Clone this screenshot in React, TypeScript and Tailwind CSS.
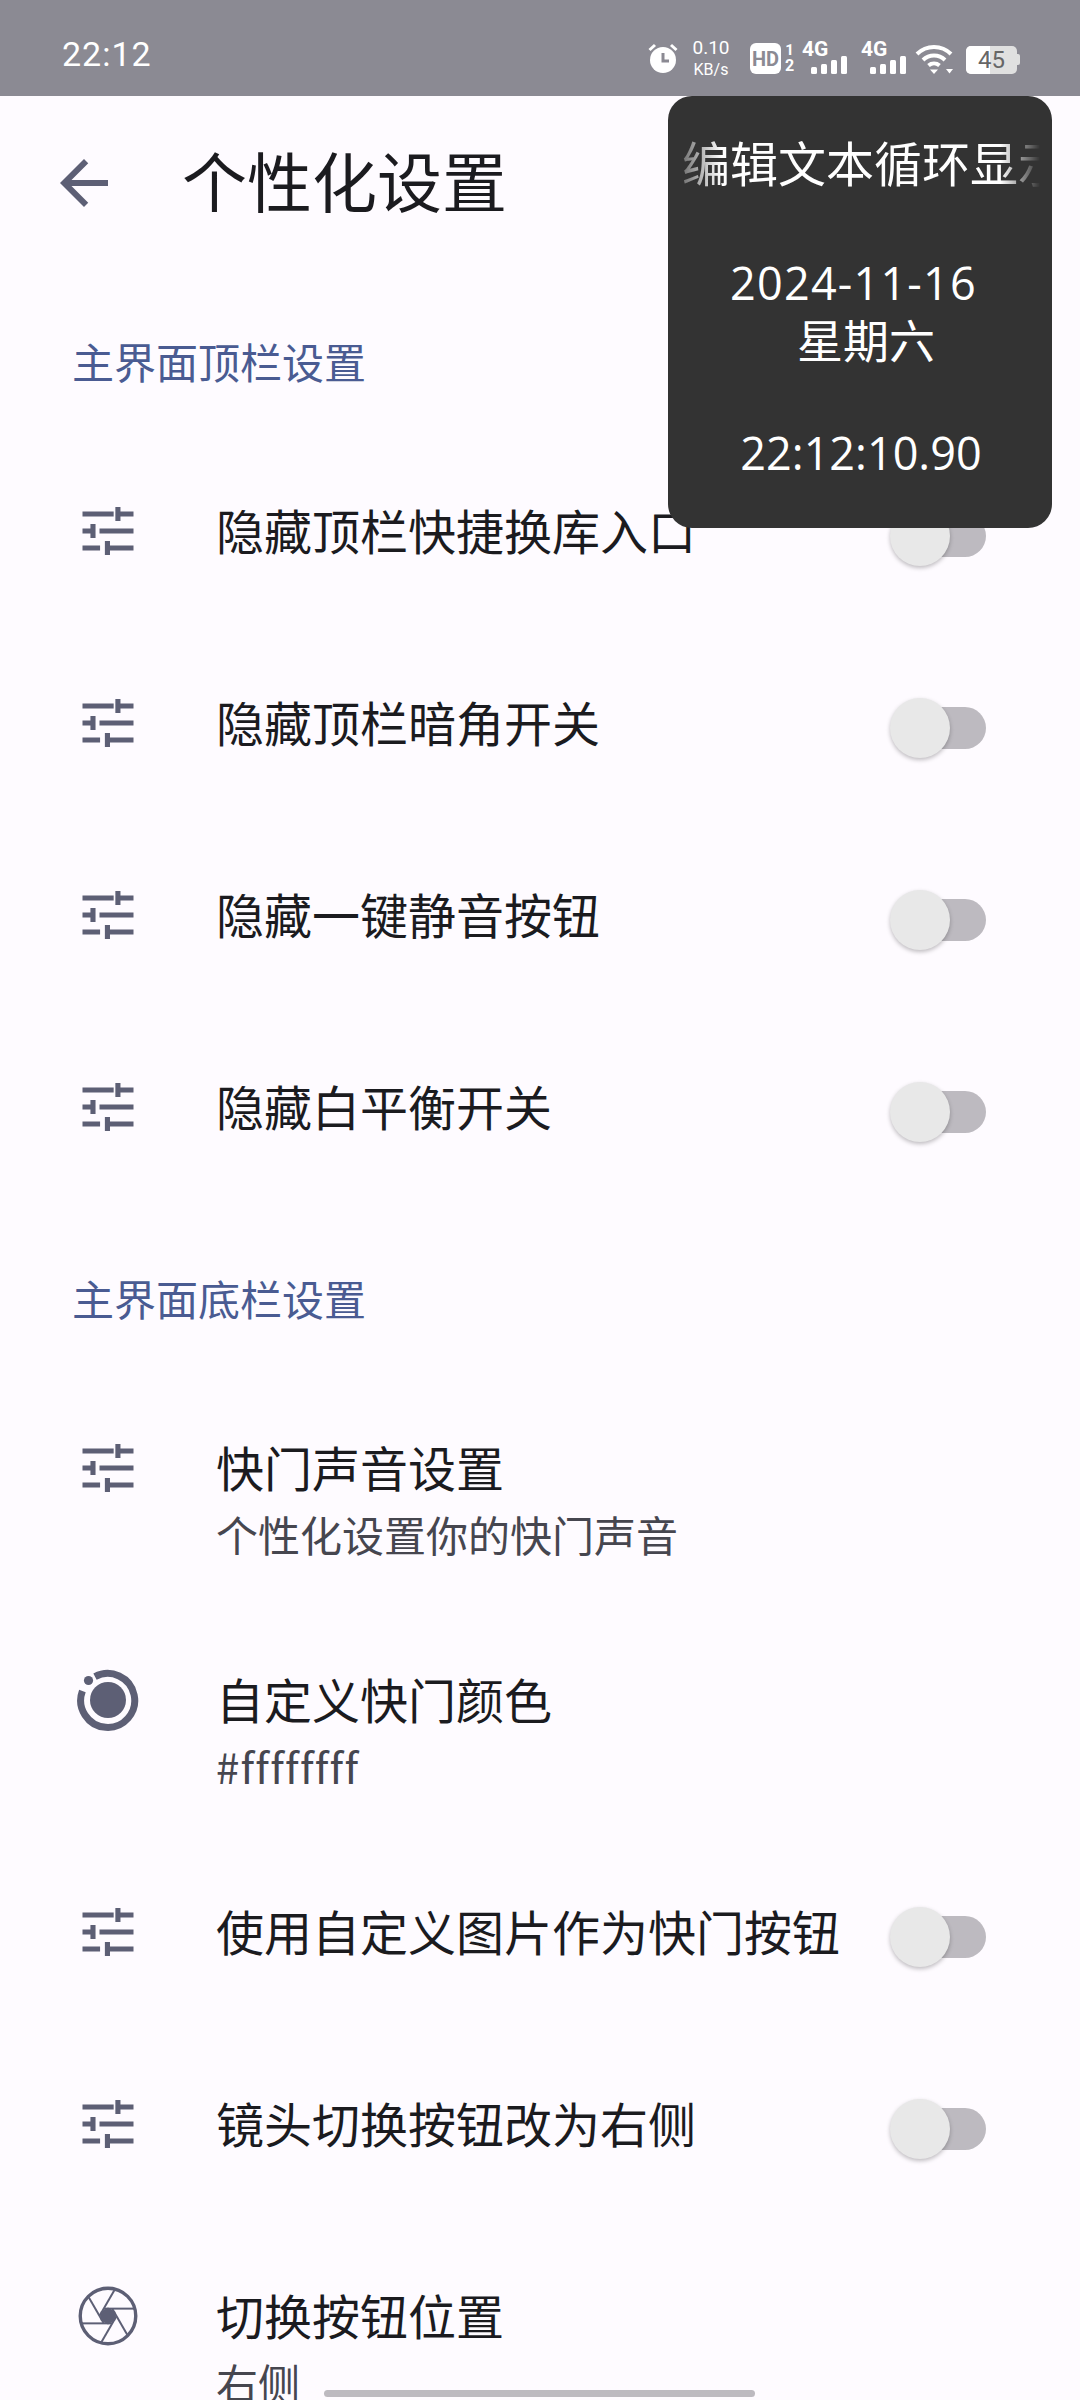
import React from "react";

const CJK = { fontFamily: '"Noto Sans CJK SC", "Noto Sans", sans-serif' };

function Tune() {
  return (
    <svg viewBox="0 0 24 24" className="w-[68px] h-[68px] fill-[#5d5f75]">
      <path d="M3 5.15h11v1.7H3zM14.6 3.5h1.8v1.65H21v1.7h-4.6V8.5h-1.8zM3 11.15h2.8V9.5h1.8v5H5.800v-1.650H3zM9 11.15h12v1.700H9zM3 17.15h6.200v1.700H3zM10.900 15.500h1.800v1.650H21v1.700h-8.300v1.650h-1.800z" />
    </svg>
  );
}

function Ring() {
  return (
    <svg viewBox="0 0 68 68" className="w-[68px] h-[68px]">
      <path d="M21 10.6 A27 27 0 1 1 8.4 25" fill="none" stroke="#5d5f75" strokeWidth="7" />
      <circle cx="34" cy="34" r="18" fill="#5d5f75" />
      <circle cx="14.5" cy="14.5" r="4.6" fill="#5d5f75" />
    </svg>
  );
}

function Aperture() {
  return (
    <svg viewBox="0 0 24 24" className="w-[68px] h-[68px]" fill="none" stroke="#5d5f75">
      <circle cx="12" cy="12" r="9.800" strokeWidth="1.200" />
      {[0, 60, 120, 180, 240, 300].map((a) => (
        <path key={a} d="M10.500 9.400H21.400" strokeWidth="0.700" transform={`rotate(${a} 12 12)`} />
      ))}
      <path d="M12 9 14.600 10.500 14.600 13.500 12 15 9.400 13.500 9.400 10.500Z" fill="#5d5f75" stroke="none" />
    </svg>
  );
}

function Toggle() {
  return (
    <div className="relative w-[91px] h-[42px] rounded-full bg-[#bdbac0] mt-[16px] shrink-0">
      <div className="absolute left-[-5px] top-[-9px] w-[60px] h-[60px] rounded-full bg-[#e8e8e8] shadow-[0_2px_4px_rgba(0,0,0,0.25)]" />
    </div>
  );
}

function Row({ title, sub, icon, toggle = true, hex = false }: { title: string; sub?: string; icon?: React.ReactNode; toggle?: boolean; hex?: boolean }) {
  return (
    <div className={`flex items-start pl-[74px] pr-[94px] pt-[64px] ${sub ? "h-[232px]" : "h-[192px]"}`}>
      <div className={`w-[68px] h-[64px] flex items-center justify-center shrink-0 ${icon ? "mt-[0px]" : "mt-[0px]"}`}>{icon ?? <Tune />}</div>
      <div className="ml-[74px] flex-1 min-w-0 mt-[-2px]">
        <div className="text-[48px] leading-[64px] text-[#1b1b1f] whitespace-nowrap">{title}</div>
        {sub && (
          <div className={`mt-[2px] text-[42px] leading-[68px] text-[#46464f] whitespace-nowrap ${hex ? "tracking-[1.2px]" : ""}`}>{sub}</div>
        )}
      </div>
      {toggle && <Toggle />}
    </div>
  );
}

function Section({ label }: { label: string }) {
  return (
    <div className="h-[169px] pt-[63px] pl-[72px] text-[42px] leading-[64px] text-[#4a5b92]">{label}</div>
  );
}

function Bars() {
  return (
    <svg viewBox="0 0 36 18" className="w-[36px] h-[18px] fill-white">
      <rect x="0" y="11" width="6" height="7" rx="1.500" />
      <rect x="10" y="8" width="6" height="10" rx="1.500" />
      <rect x="20" y="4" width="6" height="14" rx="1.500" />
      <rect x="30" y="0" width="6" height="18" rx="1.500" />
    </svg>
  );
}

function Net() {
  return (
    <div className="relative w-[44px] h-[32px]">
      <span className="absolute left-0 top-[-5px] text-[21px] leading-[24px] font-bold text-white" style={{ fontFamily: "Roboto, sans-serif" }}>4G</span>
      <div className="absolute left-[9px] bottom-0"><Bars /></div>
    </div>
  );
}

function StatusBar() {
  return (
    <div className="h-[96px] bg-[#8b8a93] flex items-start pl-[62px] shrink-0">
      <span className="text-[34px] leading-[40px] mt-[34px] text-white tracking-[1px]" style={{ fontFamily: "Roboto, sans-serif" }}>22:12</span>
      <div className="ml-auto mr-[60px] mt-[38px] flex items-start text-white" style={{ fontFamily: "Roboto, sans-serif" }}>
        <svg viewBox="0 0 32 32" className="w-[32px] h-[32px] mt-[4px]">
          <circle cx="16" cy="18" r="13" fill="#fff" />
          <path d="M16 11v8h6" fill="none" stroke="#8b8a93" strokeWidth="3" />
          <path d="M2.500 8 8 3M29.500 8 24 3" stroke="#fff" strokeWidth="3" fill="none" />
        </svg>
        <div className="ml-[10px] w-[44px] flex flex-col items-center">
          <span className="text-[19px] leading-[20px]">0.10</span>
          <span className="text-[16px] leading-[20px] mt-[2px]">KB/s</span>
        </div>
        <div className="ml-[17px] mt-[5px] w-[31px] h-[31px] rounded-[6px] bg-white flex items-center justify-center">
          <span className="text-[20px] leading-[20px] font-bold text-[#8b8a93]">HD</span>
        </div>
        <div className="ml-[2px] w-[13px] flex flex-col items-center mt-[4px] font-bold">
          <span className="text-[15px] leading-[16px]">1</span>
          <span className="text-[16px] leading-[16px]">2</span>
        </div>
        <div className="ml-[6px] mt-[4px]"><Net /></div>
        <div className="ml-[15px] mt-[4px]"><Net /></div>
        <svg viewBox="0 0 38 30" className="w-[38px] h-[30px] ml-[10px] mt-[6px]" fill="none" stroke="#fff" strokeWidth="4">
          <path d="M2 10 A24 24 0 0 1 36 10" />
          <path d="M8 16 A16 16 0 0 1 30 16" />
          <path d="M13.500 21.500 A8.500 8.500 0 0 1 24.500 21.500" />
          <path d="M15 25.500h8L19 30Z" fill="#fff" stroke="none" />
          <path d="M31 25h7l-3.500 4.500Z" fill="#fff" stroke="none" />
        </svg>
        <div className="ml-[13px] mt-[8px] relative w-[51px] h-[28px] rounded-[5px] bg-[#e0e0e0] overflow-hidden flex items-center justify-center">
          <div className="absolute left-0 top-0 bottom-0 w-[24px] bg-white" />
          <span className="relative text-[24px] leading-[28px] text-[#666]">45</span>
        </div>
        <div className="mt-[16px] w-[3px] h-[11px] rounded-r-[2px] bg-[#e0e0e0]" />
      </div>
    </div>
  );
}

function Overlay() {
  const latin = { fontFamily: '"Open Sans", "Noto Sans CJK SC", sans-serif' };
  return (
    <div className="absolute left-[668px] top-[96px] w-[384px] h-[432px] rounded-[24px] bg-[#333333] text-white pt-[35px]">
      <div className="ml-[14px] mr-[12px] overflow-hidden whitespace-nowrap text-[48px] leading-[60px] [mask-image:linear-gradient(90deg,rgba(0,0,0,0.3),black_11%,black_89%,transparent)]" style={CJK}>
        编辑文本循环显示
      </div>
      <div className="mt-[66px] text-center text-[45px] leading-[52px] mr-[13px] tracking-[1.2px]" style={latin}>2024-11-16</div>
      <div className="mt-[3px] text-center text-[46px] leading-[52px] ml-[12px]" style={CJK}>星期六</div>
      <div className="mt-[63px] text-center text-[45px] leading-[52px] ml-[2px]" style={latin}>22:12:10.90</div>
    </div>
  );
}

export default function App() {
  return (
    <div className="relative w-[1080px] h-[2400px] overflow-hidden bg-[#fefbff]" style={CJK}>
      <StatusBar />
      <div className="h-[170px] flex items-start pl-[48px]">
        <svg viewBox="0 0 24 24" className="w-[72px] h-[72px] mt-[51px] fill-[#5d5f75]">
          <path d="M20 11H7.830l5.590-5.590L12 4l-8 8 8 8 1.410-1.410L7.830 13H20v-2z" />
        </svg>
        <div className="ml-[62px] mt-[38px] text-[65px] leading-[90px] text-[#1b1b1f]">个性化设置</div>
      </div>
      <Section label="主界面顶栏设置" />
      <Row title="隐藏顶栏快捷换库入口" />
      <Row title="隐藏顶栏暗角开关" />
      <Row title="隐藏一键静音按钮" />
      <Row title="隐藏白平衡开关" />
      <Section label="主界面底栏设置" />
      <Row title="快门声音设置" sub="个性化设置你的快门声音" toggle={false} />
      <Row title="自定义快门颜色" sub="#ffffffff" icon={<Ring />} toggle={false} hex />
      <Row title="使用自定义图片作为快门按钮" />
      <Row title="镜头切换按钮改为右侧" />
      <Row title="切换按钮位置" sub="右侧" icon={<Aperture />} toggle={false} />
      <Overlay />
      <div className="absolute left-[324px] top-[2390px] w-[431px] h-[7px] rounded-full bg-[#bdbac0]" />
    </div>
  );
}
